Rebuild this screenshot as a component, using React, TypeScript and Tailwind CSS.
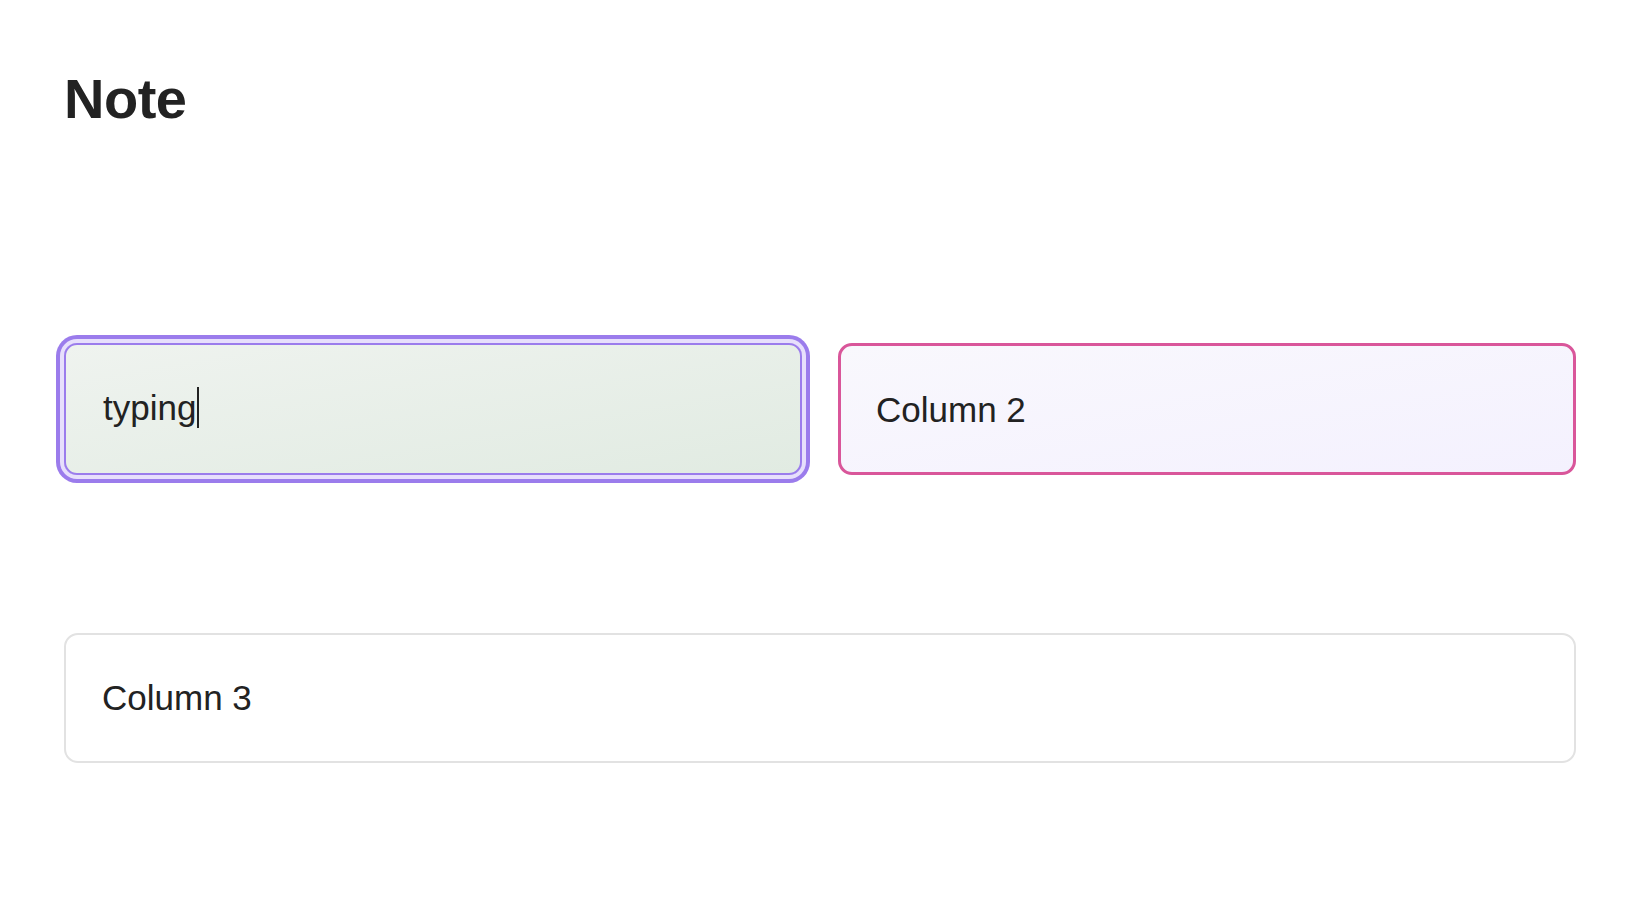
import React from "react";

export default function App() {
  return (
    <div
      className="min-h-screen w-full bg-white text-[#222222]"
      style={{ fontFamily: '"Liberation Sans", Arial, Helvetica, sans-serif' }}
    >
      <div className="pl-[64px] pr-[54px] pt-[71px]">
        <h1 className="text-[56px] leading-none font-bold tracking-[-0.5px] text-[#222222]">Note</h1>

        <div className="mt-[216px] grid grid-cols-2 gap-[36px]">
          <div className="h-[132px] rounded-[13px] border-2 border-[#9b7cec] bg-gradient-to-br from-[#eff3ef] to-[#e1ebe2] shadow-[0_0_0_4px_#e7dffc,0_0_0_8px_#9b7cec] px-[37px] flex items-center">
            <span className="text-[35px] leading-none flex items-center -mt-[3px]">
              typing
              <span className="inline-block w-[2px] h-[41px] bg-[#222222] ml-[1px]" />
            </span>
          </div>
          <div className="h-[132px] rounded-[14px] border-[3px] border-[#d9569a] bg-gradient-to-br from-[#f9f8fd] to-[#f4f1fe] px-[35px] flex items-center">
            <span className="text-[35px] leading-none">Column 2</span>
          </div>
        </div>

        <div className="mt-[158px] h-[130px] rounded-[14px] border-2 border-[#e2e2e2] bg-white px-[36px] flex items-center">
          <span className="text-[35px] leading-none -mt-[2px]">Column 3</span>
        </div>
      </div>
    </div>
  );
}
